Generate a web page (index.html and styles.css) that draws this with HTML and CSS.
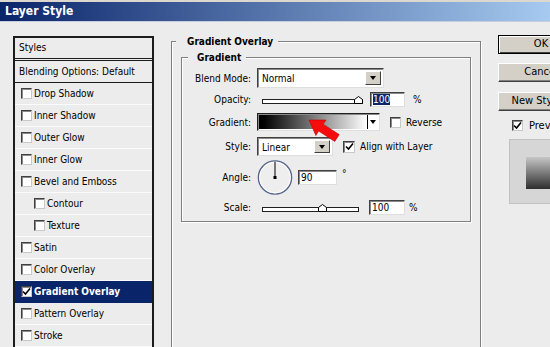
FILE: index.html
```html
<!DOCTYPE html>
<html lang="en">
<head>
    <meta charset="UTF-8">
    <title>Layer Style</title>
    <link rel="stylesheet" href="styles.css">
</head>
<body>
    <!-- Title bar -->
    <div class="titlebar">Layer Style</div>

    <div class="dialog">
        <!-- Styles list -->
        <div class="styles-list">
            <div class="list-head">Styles</div>
            <div class="list-row blend">Blending Options: Default</div>
            <div class="list-row"><span class="check"></span>Drop Shadow</div>
            <div class="list-row"><span class="check"></span>Inner Shadow</div>
            <div class="list-row"><span class="check"></span>Outer Glow</div>
            <div class="list-row"><span class="check"></span>Inner Glow</div>
            <div class="list-row"><span class="check"></span>Bevel and Emboss</div>
            <div class="list-row sub"><span class="check"></span>Contour</div>
            <div class="list-row sub"><span class="check"></span>Texture</div>
            <div class="list-row"><span class="check"></span>Satin</div>
            <div class="list-row"><span class="check"></span>Color Overlay</div>
            <div class="list-row on"><span class="check"><svg width="9" height="9" viewBox="0 0 9 9"><path d="M1 4.5 L3.5 7 L8 1.5" fill="none" stroke="#000" stroke-width="1.6"/></svg></span>Gradient Overlay</div>
            <div class="list-row"><span class="check"></span>Pattern Overlay</div>
            <div class="list-row"><span class="check"></span>Stroke</div>
        </div>

        <!-- Settings -->
        <div class="group outer">
            <div class="legend legend-outer">Gradient Overlay</div>
            <div class="group inner">
                <div class="legend legend-inner">Gradient</div>
                <div class="form">
                    <div class="row r-blend">
                        <span class="label">Blend Mode:</span>
                        <div class="select blend-select">
                            <span class="select-value">Normal</span>
                            <span class="select-btn"><i class="tri"></i></span>
                        </div>
                    </div>
                    <div class="row r-opacity">
                        <span class="label">Opacity:</span>
                        <div class="track opacity-track"><svg class="thumb" style="left: 91px" width="9" height="8" viewBox="0 0 9 8"><polygon points="0.5,7.5 0.5,3.5 4.5,0.5 8.5,3.5 8.5,7.5" fill="#fff" stroke="#000"/></svg></div>
                        <div class="field opacity-field"><span class="sel">100</span></div>
                        <span class="unit opacity-unit">%</span>
                    </div>
                    <div class="row r-gradient">
                        <span class="label">Gradient:</span>
                        <div class="swatch">
                            <span class="ramp"></span>
                            <span class="ramp-btn"><i class="tri"></i></span>
                        </div>
                        <span class="check reverse-check"></span>
                        <span class="check-text">Reverse</span>
                    </div>
                    <div class="row r-style">
                        <span class="label">Style:</span>
                        <div class="select style-select">
                            <span class="select-value">Linear</span>
                            <span class="select-btn"><i class="tri"></i></span>
                        </div>
                        <span class="check align-check"><svg width="9" height="9" viewBox="0 0 9 9"><path d="M1 4.5 L3.5 7 L8 1.5" fill="none" stroke="#000" stroke-width="1.6"/></svg></span>
                        <span class="check-text">Align with Layer</span>
                    </div>
                    <div class="row r-angle">
                        <span class="label">Angle:</span>
                        <svg class="dial" width="36" height="35" viewBox="0 0 36 35">
                            <circle cx="18" cy="17.5" r="16.6" fill="#eeeeee" stroke="#56658c" stroke-width="1.4"/>
                            <circle cx="18" cy="17.5" r="15.4" fill="none" stroke="#ffffff" stroke-width="1"/>
                            <line x1="18" y1="17.5" x2="18" y2="1.5" stroke="#000" stroke-width="1"/>
                            <rect x="16.5" y="16" width="3" height="3" fill="#000"/>
                        </svg>
                        <div class="field angle-field">90</div>
                        <span class="unit degree">°</span>
                    </div>
                    <div class="row r-scale">
                        <span class="label">Scale:</span>
                        <div class="track scale-track"><svg class="thumb" style="left: 55px" width="9" height="8" viewBox="0 0 9 8"><polygon points="0.5,7.5 0.5,3.5 4.5,0.5 8.5,3.5 8.5,7.5" fill="#fff" stroke="#000"/></svg></div>
                        <div class="field scale-field">100</div>
                        <span class="unit scale-unit">%</span>
                    </div>

                    <!-- red pointer over the gradient picker -->
                    <svg class="pointer" width="40" height="28" viewBox="0 0 40 28">
                        <polygon points="4,2 21,2 18,6.2 34.2,16.6 29.8,23.4 13.6,13 10.9,17.5" fill="#f50d0d" stroke="#c80000" stroke-width="0.6"/>
                    </svg>
                </div>
            </div>
        </div>

        <!-- Buttons and preview -->
        <div class="side">
            <div class="btn default">OK</div>
            <div class="btn cancel">Cancel</div>
            <div class="btn new-style">New Style...</div>
            <div class="preview-row">
                <span class="check"><svg width="9" height="9" viewBox="0 0 9 9"><path d="M1 4.5 L3.5 7 L8 1.5" fill="none" stroke="#000" stroke-width="1.6"/></svg></span>
                <span class="check-text">Preview</span>
            </div>
            <div class="preview-box">
                <div class="preview-square"></div>
            </div>
        </div>
    </div>
</body>
</html>
```

FILE: styles.css
```css
* {
    margin: 0;
    padding: 0;
    box-sizing: border-box;
}

body {
    width: 550px;
    height: 347px;
    overflow: hidden;
    background-color: #ececec;
    font-family: "DejaVu Sans Condensed", "DejaVu Sans", sans-serif;
    font-size: 10px;
    color: #000;
}

/* Title bar */
.titlebar {
    height: 22px;
    border-top: 2px solid #dcd8d0;
    border-bottom: 1px solid #c4cede;
    background: linear-gradient(to right, #0a246a, #a6caf0);
    color: #fff;
    font-weight: bold;
    font-size: 12px;
    line-height: 19px;
    padding-left: 5px;
}

.dialog {
    display: flex;
    align-items: flex-start;
    height: 325px;
    padding-left: 13px;
    overflow: hidden;
}

.dialog > * {
    flex-shrink: 0;
}

/* Styles list */
.styles-list {
    width: 141px;
    margin-top: 14px;
    border: 2px solid #1c1c1c;
    border-bottom: none;
}

.list-head {
    height: 23px;
    line-height: 20px;
    padding-left: 4px;
    border-bottom: 3px double #1c1c1c;
}

.list-row {
    height: 22px;
    display: flex;
    align-items: center;
    gap: 2px;
    padding-left: 6px;
    border-bottom: 1px solid #fbfbfb;
}

.list-row.blend {
    padding-left: 4px;
    border-bottom: 1px solid #1c1c1c;
}

.list-row.sub {
    padding-left: 19px;
}

.list-row.on {
    background-color: #0a246a;
    color: #fff;
    font-weight: bold;
    border-bottom-color: #0a246a;
}

/* Checkbox */
.check {
    width: 11px;
    height: 11px;
    flex-shrink: 0;
    background-color: #fff;
    border: 1px solid;
    border-color: #404040 #c8c8c8 #c8c8c8 #404040;
    box-shadow: inset 1px 1px 0 #8a8a8a;
    display: flex;
    align-items: center;
    justify-content: center;
}

.check svg {
    display: block;
}

/* Group boxes */
.group {
    border: 1px solid #7f7f7f;
    box-shadow: inset 1px 1px 0 #fff, 1px 1px 0 #fff;
}

.group.outer {
    width: 310px;
    height: 307px;
    margin-left: 17px;
    margin-top: 19px;
    padding: 0 9px;
}

.group.inner {
    margin-top: 9px;
    padding-bottom: 6px;
}

.legend {
    width: fit-content;
    margin-top: -6px;
    line-height: 12px;
    background-color: #ececec;
    font-weight: bold;
}

.legend-outer {
    margin-left: -5px;
    padding: 0 5px 0 11px;
}

.legend-inner {
    margin-left: 6px;
    padding: 0 5px 0 9px;
}

/* Form rows */
.form {
    position: relative;
    padding-top: 4px;
}

.row {
    display: flex;
    align-items: center;
}

.row > * {
    flex-shrink: 0;
}

.label {
    width: 69px;
    margin-right: 6px;
    text-align: right;
}

.r-blend { height: 20px; }
.r-opacity { height: 15px; margin-top: 4px; }
.r-gradient { height: 18px; margin-top: 6px; }
.r-style { height: 19px; margin-top: 6px; }
.r-angle { height: 35px; margin-top: 4px; }
.r-scale { height: 15px; margin-top: 5px; }

/* Sunken controls */
.select,
.swatch,
.field {
    background-color: #fff;
    border: 1px solid;
    border-color: #404040 #dedede #dedede #404040;
    box-shadow: inset 1px 1px 0 #8a8a8a;
}

.select {
    display: flex;
    height: 100%;
    padding: 2px;
}

.blend-select { width: 127px; }
.style-select { width: 76px; }

.select-value {
    flex: 1;
    padding-left: 2px;
    line-height: 15px;
}

.select-btn {
    width: 16px;
    background-color: #d4d0c8;
    border: 1px solid;
    border-color: #fff #404040 #404040 #fff;
    display: flex;
    align-items: center;
    justify-content: center;
}

.tri {
    width: 0;
    height: 0;
    border-left: 3.5px solid transparent;
    border-right: 3.5px solid transparent;
    border-top: 4px solid #000;
}

.field {
    height: 15px;
    padding-left: 2px;
    line-height: 13px;
}

.sel {
    background-color: #0a246a;
    color: #fff;
}

.opacity-field { width: 35px; margin-left: 7px; }
.angle-field { width: 39px; margin-left: 5px; }
.scale-field { width: 36px; margin-left: 10px; }

.opacity-unit { margin-left: 8px; }
.scale-unit { margin-left: 4px; }

.degree {
    align-self: flex-start;
    margin-top: 8px;
    margin-left: 5px;
}

/* Sliders */
.track {
    position: relative;
    height: 5px;
    margin-left: 5px;
    margin-top: 3px;
    background-color: #fff;
    border: 1px solid #202020;
}

.opacity-track { width: 101px; }
.scale-track { width: 97px; margin-top: 4px; }

.thumb {
    position: absolute;
    top: -4px;
    display: block;
}

/* Gradient picker */
.swatch {
    width: 123px;
    height: 100%;
    display: flex;
    padding: 1px;
    border-color: #202020 #dedede #dedede #202020;
}

.ramp {
    flex: 1;
    background: linear-gradient(to right, #000 4%, #fff);
}

.ramp-btn {
    width: 11px;
    border-left: 1px solid #000;
    background-color: #fff;
    display: flex;
    align-items: center;
    justify-content: center;
}

.reverse-check { margin-left: 10px; }
.align-check { margin-left: 10px; width: 12px; height: 12px; }

.check-text {
    margin-left: 5px;
}

.dial {
    display: block;
}

.pointer {
    position: absolute;
    left: 123px;
    top: 54px;
}

/* Right column */
.side {
    width: 86px;
    margin-left: 17px;
    margin-top: 13px;
    display: flex;
    flex-direction: column;
    font-size: 11px;
}

.btn {
    height: 19px;
    background-color: #d4d0c8;
    border: 1px solid;
    border-color: #fff #404040 #404040 #fff;
    box-shadow: inset -1px -1px 0 #808080;
    text-align: center;
    line-height: 16px;
}

.btn.default {
    border-color: #000;
    box-shadow: inset 1px 1px 0 #fff, inset -1px -1px 0 #404040;
}

.cancel { margin-top: 9px; }
.new-style { margin-top: 10px; }

.preview-row {
    display: flex;
    align-items: center;
    margin-top: 8px;
    margin-left: 14px;
    height: 12px;
}

.preview-row .check-text {
    margin-left: 6px;
}

.preview-box {
    width: 80px;
    height: 65px;
    margin-top: 8px;
    margin-left: 11px;
    padding: 17px 0 0 16px;
    background-color: #d6d6d6;
    border: 1px solid #c2c2c2;
}

.preview-square {
    width: 32px;
    height: 32px;
    background: linear-gradient(#c6c6c6, #2e2e2e);
}
```
